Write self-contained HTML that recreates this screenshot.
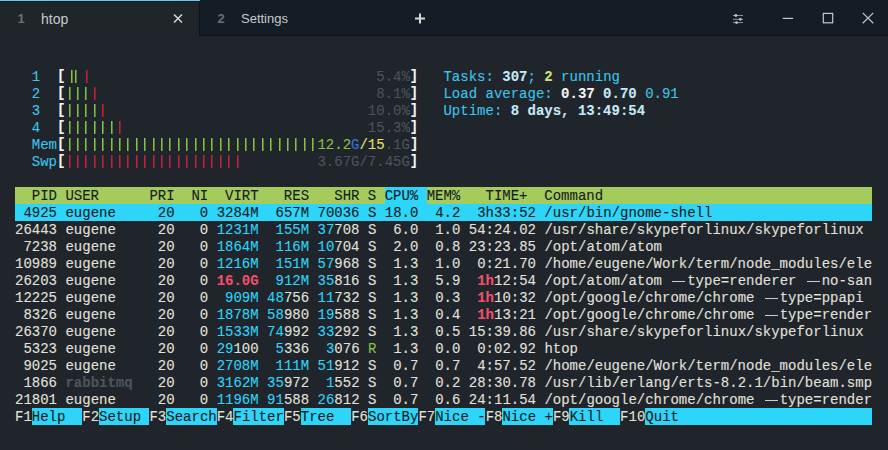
<!DOCTYPE html>
<html><head><meta charset="utf-8"><style>
html,body{margin:0;padding:0;}
body{width:888px;height:450px;overflow:hidden;background:#1f252b;position:relative;font-family:"Liberation Mono",monospace;}
.r{position:absolute;left:15.0px;height:17px;line-height:17px;font-size:14px;white-space:pre;padding-top:1px;box-sizing:border-box;-webkit-text-stroke:0.1px currentColor;}
.b{position:absolute;height:17px;}
.dd{display:inline-block;width:16.8px;height:1.2px;vertical-align:3px;opacity:0.9;padding:0 2px;box-sizing:border-box;background:currentColor;background-clip:content-box;}
.bar{position:absolute;width:2px;height:13px;}
#title{position:absolute;left:0;top:0;width:888px;height:35px;background:#141c25;border-bottom:1px solid #0e1216;}
#tab1{position:absolute;left:0;top:0;width:199px;height:36px;background:#1f252b;}
#tab1top{position:absolute;left:0;top:0;width:200px;height:1px;background:#5ccdf0;}
#tab1sh{position:absolute;left:0;top:1px;width:199px;height:1px;background:#171b1f;}
#tab2b{position:absolute;left:199px;top:0;width:1px;height:35px;background:#0e1216;}
.ts{position:absolute;font-family:"Liberation Sans",sans-serif;font-size:13px;line-height:16px;white-space:pre;}
</style></head><body>
<div id="title"></div>
<div id="tab1"></div>
<div id="tab2b"></div>
<div id="tab1top"></div>
<div id="tab1sh"></div>
<div class="ts" style="left:17.5px;top:11px;color:#6c6e70;font-weight:bold">1</div>
<div class="ts" style="left:41px;top:11px;color:#c8c9ca;font-size:14px;line-height:16px">htop</div>
<svg style="position:absolute;left:173px;top:13px" width="10" height="11" viewBox="0 0 10 11"><path d="M1 1.5L9 9.5M9 1.5L1 9.5" stroke="#d8d8d8" stroke-width="1.5"/></svg>
<div class="ts" style="left:217.5px;top:11px;color:#6c6e70;font-weight:bold">2</div>
<div class="ts" style="left:241px;top:11px;color:#c8c9ca">Settings</div>
<svg style="position:absolute;left:414px;top:13px" width="12" height="12" viewBox="0 0 12 12"><path d="M6 0.5V10.5M1 5.5H11" stroke="#d8d8d8" stroke-width="2"/></svg>
<svg style="position:absolute;left:731px;top:12px" width="14" height="14" viewBox="0 0 14 14"><path d="M2 3.5H12M2 7.3H12M2 10.6H12" stroke="#9aa0a6" stroke-width="0.9"/><circle cx="4.9" cy="3.5" r="1.4" fill="#c4c4c4"/><circle cx="9.3" cy="7.3" r="1.4" fill="#c4c4c4"/><circle cx="5.6" cy="10.6" r="1.4" fill="#c4c4c4"/></svg>
<svg style="position:absolute;left:780px;top:10px" width="100" height="16" viewBox="0 0 100 16"><path d="M2.7 8.4H13.1" stroke="#c8c8c8" stroke-width="1.2"/><rect x="43.3" y="3.4" width="9.4" height="9.4" fill="none" stroke="#c8c8c8" stroke-width="1.2"/><path d="M82.7 2.9L93.3 13.2M93.3 2.9L82.7 13.2" stroke="#c8c8c8" stroke-width="1.2"/></svg>
<div class="r" style="top:68px"><span style="color:#3cc6ec">  1  </span><span style="color:#f4f4f4;font-weight:bold;position:relative;top:-1px">[</span></div>
<div class="r" style="top:68px;left:376.26px"><span style="color:#4d5358">5.4%</span><span style="color:#f4f4f4;font-weight:bold;position:relative;top:-1px">]</span></div>
<div class="bar" style="left:71px;top:70px;background:linear-gradient(90deg,#86c040 50%,#557a33 50%)"></div>
<div class="bar" style="left:75px;top:70px;background:linear-gradient(90deg,#86c040 50%,#557a33 50%)"></div>
<div class="bar" style="left:86px;top:70px;background:linear-gradient(90deg,#c02039 50%,#782234 50%)"></div>
<div class="r" style="top:85px"><span style="color:#3cc6ec">  2  </span><span style="color:#f4f4f4;font-weight:bold;position:relative;top:-1px">[</span></div>
<div class="r" style="top:85px;left:376.26px"><span style="color:#4d5358">8.1%</span><span style="color:#f4f4f4;font-weight:bold;position:relative;top:-1px">]</span></div>
<div class="bar" style="left:69px;top:87px;background:linear-gradient(90deg,#86c040 50%,#557a33 50%)"></div>
<div class="bar" style="left:77px;top:87px;background:linear-gradient(90deg,#86c040 50%,#557a33 50%)"></div>
<div class="bar" style="left:85px;top:87px;background:linear-gradient(90deg,#86c040 50%,#557a33 50%)"></div>
<div class="bar" style="left:94px;top:87px;background:linear-gradient(90deg,#c02039 50%,#782234 50%)"></div>
<div class="r" style="top:102px"><span style="color:#3cc6ec">  3  </span><span style="color:#f4f4f4;font-weight:bold;position:relative;top:-1px">[</span></div>
<div class="r" style="top:102px;left:367.85px"><span style="color:#4d5358">10.0%</span><span style="color:#f4f4f4;font-weight:bold;position:relative;top:-1px">]</span></div>
<div class="bar" style="left:69px;top:104px;background:linear-gradient(90deg,#86c040 50%,#557a33 50%)"></div>
<div class="bar" style="left:77px;top:104px;background:linear-gradient(90deg,#86c040 50%,#557a33 50%)"></div>
<div class="bar" style="left:85px;top:104px;background:linear-gradient(90deg,#86c040 50%,#557a33 50%)"></div>
<div class="bar" style="left:94px;top:104px;background:linear-gradient(90deg,#86c040 50%,#557a33 50%)"></div>
<div class="bar" style="left:102px;top:104px;background:linear-gradient(90deg,#c02039 50%,#782234 50%)"></div>
<div class="r" style="top:119px"><span style="color:#3cc6ec">  4  </span><span style="color:#f4f4f4;font-weight:bold;position:relative;top:-1px">[</span></div>
<div class="r" style="top:119px;left:367.85px"><span style="color:#4d5358">15.3%</span><span style="color:#f4f4f4;font-weight:bold;position:relative;top:-1px">]</span></div>
<div class="bar" style="left:69px;top:121px;background:linear-gradient(90deg,#86c040 50%,#557a33 50%)"></div>
<div class="bar" style="left:77px;top:121px;background:linear-gradient(90deg,#86c040 50%,#557a33 50%)"></div>
<div class="bar" style="left:85px;top:121px;background:linear-gradient(90deg,#86c040 50%,#557a33 50%)"></div>
<div class="bar" style="left:94px;top:121px;background:linear-gradient(90deg,#86c040 50%,#557a33 50%)"></div>
<div class="bar" style="left:102px;top:121px;background:linear-gradient(90deg,#86c040 50%,#557a33 50%)"></div>
<div class="bar" style="left:111px;top:121px;background:linear-gradient(90deg,#86c040 50%,#557a33 50%)"></div>
<div class="bar" style="left:119px;top:121px;background:linear-gradient(90deg,#c02039 50%,#782234 50%)"></div>
<div class="r" style="top:136px"><span style="color:#3cc6ec">  Mem</span><span style="color:#f4f4f4;font-weight:bold;position:relative;top:-1px">[</span></div>
<div class="bar" style="left:69px;top:138px;background:linear-gradient(90deg,#86c040 50%,#557a33 50%)"></div>
<div class="bar" style="left:77px;top:138px;background:linear-gradient(90deg,#86c040 50%,#557a33 50%)"></div>
<div class="bar" style="left:85px;top:138px;background:linear-gradient(90deg,#86c040 50%,#557a33 50%)"></div>
<div class="bar" style="left:94px;top:138px;background:linear-gradient(90deg,#86c040 50%,#557a33 50%)"></div>
<div class="bar" style="left:102px;top:138px;background:linear-gradient(90deg,#86c040 50%,#557a33 50%)"></div>
<div class="bar" style="left:111px;top:138px;background:linear-gradient(90deg,#86c040 50%,#557a33 50%)"></div>
<div class="bar" style="left:119px;top:138px;background:linear-gradient(90deg,#86c040 50%,#557a33 50%)"></div>
<div class="bar" style="left:127px;top:138px;background:linear-gradient(90deg,#86c040 50%,#557a33 50%)"></div>
<div class="bar" style="left:136px;top:138px;background:linear-gradient(90deg,#86c040 50%,#557a33 50%)"></div>
<div class="bar" style="left:144px;top:138px;background:linear-gradient(90deg,#86c040 50%,#557a33 50%)"></div>
<div class="bar" style="left:153px;top:138px;background:linear-gradient(90deg,#86c040 50%,#557a33 50%)"></div>
<div class="bar" style="left:161px;top:138px;background:linear-gradient(90deg,#86c040 50%,#557a33 50%)"></div>
<div class="bar" style="left:169px;top:138px;background:linear-gradient(90deg,#86c040 50%,#557a33 50%)"></div>
<div class="bar" style="left:178px;top:138px;background:linear-gradient(90deg,#86c040 50%,#557a33 50%)"></div>
<div class="bar" style="left:186px;top:138px;background:linear-gradient(90deg,#86c040 50%,#557a33 50%)"></div>
<div class="bar" style="left:195px;top:138px;background:linear-gradient(90deg,#86c040 50%,#557a33 50%)"></div>
<div class="bar" style="left:203px;top:138px;background:linear-gradient(90deg,#86c040 50%,#557a33 50%)"></div>
<div class="bar" style="left:211px;top:138px;background:linear-gradient(90deg,#86c040 50%,#557a33 50%)"></div>
<div class="bar" style="left:220px;top:138px;background:linear-gradient(90deg,#86c040 50%,#557a33 50%)"></div>
<div class="bar" style="left:228px;top:138px;background:linear-gradient(90deg,#86c040 50%,#557a33 50%)"></div>
<div class="bar" style="left:237px;top:138px;background:linear-gradient(90deg,#86c040 50%,#557a33 50%)"></div>
<div class="bar" style="left:245px;top:138px;background:linear-gradient(90deg,#86c040 50%,#557a33 50%)"></div>
<div class="bar" style="left:253px;top:138px;background:linear-gradient(90deg,#86c040 50%,#557a33 50%)"></div>
<div class="bar" style="left:262px;top:138px;background:linear-gradient(90deg,#86c040 50%,#557a33 50%)"></div>
<div class="bar" style="left:270px;top:138px;background:linear-gradient(90deg,#86c040 50%,#557a33 50%)"></div>
<div class="bar" style="left:279px;top:138px;background:linear-gradient(90deg,#86c040 50%,#557a33 50%)"></div>
<div class="bar" style="left:287px;top:138px;background:linear-gradient(90deg,#86c040 50%,#557a33 50%)"></div>
<div class="bar" style="left:295px;top:138px;background:linear-gradient(90deg,#86c040 50%,#557a33 50%)"></div>
<div class="bar" style="left:304px;top:138px;background:linear-gradient(90deg,#86c040 50%,#557a33 50%)"></div>
<div class="bar" style="left:312px;top:138px;background:linear-gradient(90deg,#86c040 50%,#557a33 50%)"></div>
<div class="r" style="top:136px;left:317.45px"><span style="color:#86c040">12.2</span><span style="color:#3a6fd8">G</span><span style="color:#e8e06a">/15</span><span style="color:#4d5358">.1G</span><span style="color:#f4f4f4;font-weight:bold;position:relative;top:-1px">]</span></div>
<div class="r" style="top:153px"><span style="color:#3cc6ec">  Swp</span><span style="color:#f4f4f4;font-weight:bold;position:relative;top:-1px">[</span></div>
<div class="bar" style="left:69px;top:155px;background:linear-gradient(90deg,#c02039 50%,#782234 50%)"></div>
<div class="bar" style="left:77px;top:155px;background:linear-gradient(90deg,#c02039 50%,#782234 50%)"></div>
<div class="bar" style="left:85px;top:155px;background:linear-gradient(90deg,#c02039 50%,#782234 50%)"></div>
<div class="bar" style="left:94px;top:155px;background:linear-gradient(90deg,#c02039 50%,#782234 50%)"></div>
<div class="bar" style="left:102px;top:155px;background:linear-gradient(90deg,#c02039 50%,#782234 50%)"></div>
<div class="bar" style="left:111px;top:155px;background:linear-gradient(90deg,#c02039 50%,#782234 50%)"></div>
<div class="bar" style="left:119px;top:155px;background:linear-gradient(90deg,#c02039 50%,#782234 50%)"></div>
<div class="bar" style="left:127px;top:155px;background:linear-gradient(90deg,#c02039 50%,#782234 50%)"></div>
<div class="bar" style="left:136px;top:155px;background:linear-gradient(90deg,#c02039 50%,#782234 50%)"></div>
<div class="bar" style="left:144px;top:155px;background:linear-gradient(90deg,#c02039 50%,#782234 50%)"></div>
<div class="bar" style="left:153px;top:155px;background:linear-gradient(90deg,#c02039 50%,#782234 50%)"></div>
<div class="bar" style="left:161px;top:155px;background:linear-gradient(90deg,#c02039 50%,#782234 50%)"></div>
<div class="bar" style="left:169px;top:155px;background:linear-gradient(90deg,#c02039 50%,#782234 50%)"></div>
<div class="bar" style="left:178px;top:155px;background:linear-gradient(90deg,#c02039 50%,#782234 50%)"></div>
<div class="bar" style="left:186px;top:155px;background:linear-gradient(90deg,#c02039 50%,#782234 50%)"></div>
<div class="bar" style="left:195px;top:155px;background:linear-gradient(90deg,#c02039 50%,#782234 50%)"></div>
<div class="bar" style="left:203px;top:155px;background:linear-gradient(90deg,#c02039 50%,#782234 50%)"></div>
<div class="bar" style="left:211px;top:155px;background:linear-gradient(90deg,#c02039 50%,#782234 50%)"></div>
<div class="bar" style="left:220px;top:155px;background:linear-gradient(90deg,#c02039 50%,#782234 50%)"></div>
<div class="bar" style="left:228px;top:155px;background:linear-gradient(90deg,#c02039 50%,#782234 50%)"></div>
<div class="bar" style="left:237px;top:155px;background:linear-gradient(90deg,#c02039 50%,#782234 50%)"></div>
<div class="r" style="top:153px;left:317.45px"><span style="color:#4d5358">3.67G/7.45G</span><span style="color:#f4f4f4;font-weight:bold;position:relative;top:-1px">]</span></div>
<div class="r" style="top:68px;left:443.47px"><span style="color:#3cc6ec">Tasks: </span><span style="color:#c6e8f8;font-weight:bold">307</span><span style="color:#3cc6ec">; </span><span style="color:#c9e27a;font-weight:bold">2</span><span style="color:#3cc6ec"> running</span></div>
<div class="r" style="top:85px;left:443.47px"><span style="color:#3cc6ec">Load average: </span><span style="color:#f4f4f4;font-weight:bold">0.37 </span><span style="color:#c6e8f8;font-weight:bold">0.70 </span><span style="color:#3cc6ec">0.91</span></div>
<div class="r" style="top:102px;left:443.47px"><span style="color:#3cc6ec">Uptime: </span><span style="color:#c6e8f8;font-weight:bold">8 days, 13:49:54</span></div>
<div class="b" style="top:187px;left:15.00px;width:856.93px;background:#a5cb5c"></div>
<div class="b" style="top:187px;left:384.66px;width:42.01px;background:#2dd5f9"></div>
<div class="r" style="top:187px"><span style="color:#141b21">  PID USER      PRI  NI  VIRT   RES   SHR S CPU% MEM%   TIME+  Command</span></div>
<div class="b" style="top:204px;left:15.00px;width:856.93px;background:#2dd5f9"></div>
<div class="r" style="top:204px"><span style="color:#141b21"> 4925 </span><span style="color:#141b21">eugene     </span><span style="color:#141b21">20   0 </span><span style="color:#141b21">3284M</span><span style="color:#141b21"> </span><span style="color:#141b21"> 657M</span><span style="color:#141b21"> </span><span style="color:#141b21">70036</span><span style="color:#141b21"> </span><span style="color:#141b21">S</span><span style="color:#141b21"> 18.0  4.2 </span><span style="color:#141b21"> 3h33:52</span><span style="color:#141b21"> /usr/bin/gnome-shell</span></div>
<div class="r" style="top:221px"><span style="color:#e2e1dc">26443 </span><span style="color:#e2e1dc">eugene     </span><span style="color:#e2e1dc">20   0 </span><span style="color:#2dd5f9">1231M</span><span style="color:#e2e1dc"> </span><span style="color:#2dd5f9"> 155M</span><span style="color:#e2e1dc"> </span><span style="color:#2dd5f9">37</span><span style="color:#e2e1dc">708</span><span style="color:#e2e1dc"> </span><span style="color:#e2e1dc">S</span><span style="color:#e2e1dc">  6.0  1.0 </span><span style="color:#e2e1dc">54:24.02</span><span style="color:#e2e1dc"> /usr/share/skypeforlinux/skypeforlinux</span></div>
<div class="r" style="top:238px"><span style="color:#e2e1dc"> 7238 </span><span style="color:#e2e1dc">eugene     </span><span style="color:#e2e1dc">20   0 </span><span style="color:#2dd5f9">1864M</span><span style="color:#e2e1dc"> </span><span style="color:#2dd5f9"> 116M</span><span style="color:#e2e1dc"> </span><span style="color:#2dd5f9">10</span><span style="color:#e2e1dc">704</span><span style="color:#e2e1dc"> </span><span style="color:#e2e1dc">S</span><span style="color:#e2e1dc">  2.0  0.8 </span><span style="color:#e2e1dc">23:23.85</span><span style="color:#e2e1dc"> /opt/atom/atom</span></div>
<div class="r" style="top:255px"><span style="color:#e2e1dc">10989 </span><span style="color:#e2e1dc">eugene     </span><span style="color:#e2e1dc">20   0 </span><span style="color:#2dd5f9">1216M</span><span style="color:#e2e1dc"> </span><span style="color:#2dd5f9"> 151M</span><span style="color:#e2e1dc"> </span><span style="color:#2dd5f9">57</span><span style="color:#e2e1dc">968</span><span style="color:#e2e1dc"> </span><span style="color:#e2e1dc">S</span><span style="color:#e2e1dc">  1.3  1.0 </span><span style="color:#e2e1dc"> 0:21.70</span><span style="color:#e2e1dc"> /home/eugene/Work/term/node_modules/ele</span></div>
<div class="r" style="top:272px"><span style="color:#e2e1dc">26203 </span><span style="color:#e2e1dc">eugene     </span><span style="color:#e2e1dc">20   0 </span><span style="color:#f0506e;font-weight:bold">16.0G</span><span style="color:#e2e1dc"> </span><span style="color:#2dd5f9"> 912M</span><span style="color:#e2e1dc"> </span><span style="color:#2dd5f9">35</span><span style="color:#e2e1dc">816</span><span style="color:#e2e1dc"> </span><span style="color:#e2e1dc">S</span><span style="color:#e2e1dc">  1.3  5.9 </span><span style="color:#e2e1dc"> </span><span style="color:#f0506e;font-weight:bold">1h</span><span style="color:#e2e1dc">12:54</span><span style="color:#e2e1dc"> /opt/atom/atom <span class="dd"></span>type=renderer <span class="dd"></span>no-san</span></div>
<div class="r" style="top:289px"><span style="color:#e2e1dc">12225 </span><span style="color:#e2e1dc">eugene     </span><span style="color:#e2e1dc">20   0 </span><span style="color:#2dd5f9"> 909M</span><span style="color:#e2e1dc"> </span><span style="color:#2dd5f9">48</span><span style="color:#e2e1dc">756</span><span style="color:#e2e1dc"> </span><span style="color:#2dd5f9">11</span><span style="color:#e2e1dc">732</span><span style="color:#e2e1dc"> </span><span style="color:#e2e1dc">S</span><span style="color:#e2e1dc">  1.3  0.3 </span><span style="color:#e2e1dc"> </span><span style="color:#f0506e;font-weight:bold">1h</span><span style="color:#e2e1dc">10:32</span><span style="color:#e2e1dc"> /opt/google/chrome/chrome <span class="dd"></span>type=ppapi</span></div>
<div class="r" style="top:306px"><span style="color:#e2e1dc"> 8326 </span><span style="color:#e2e1dc">eugene     </span><span style="color:#e2e1dc">20   0 </span><span style="color:#2dd5f9">1878M</span><span style="color:#e2e1dc"> </span><span style="color:#2dd5f9">58</span><span style="color:#e2e1dc">980</span><span style="color:#e2e1dc"> </span><span style="color:#2dd5f9">19</span><span style="color:#e2e1dc">588</span><span style="color:#e2e1dc"> </span><span style="color:#e2e1dc">S</span><span style="color:#e2e1dc">  1.3  0.4 </span><span style="color:#e2e1dc"> </span><span style="color:#f0506e;font-weight:bold">1h</span><span style="color:#e2e1dc">13:21</span><span style="color:#e2e1dc"> /opt/google/chrome/chrome <span class="dd"></span>type=render</span></div>
<div class="r" style="top:323px"><span style="color:#e2e1dc">26370 </span><span style="color:#e2e1dc">eugene     </span><span style="color:#e2e1dc">20   0 </span><span style="color:#2dd5f9">1533M</span><span style="color:#e2e1dc"> </span><span style="color:#2dd5f9">74</span><span style="color:#e2e1dc">992</span><span style="color:#e2e1dc"> </span><span style="color:#2dd5f9">33</span><span style="color:#e2e1dc">292</span><span style="color:#e2e1dc"> </span><span style="color:#e2e1dc">S</span><span style="color:#e2e1dc">  1.3  0.5 </span><span style="color:#e2e1dc">15:39.86</span><span style="color:#e2e1dc"> /usr/share/skypeforlinux/skypeforlinux</span></div>
<div class="r" style="top:340px"><span style="color:#e2e1dc"> 5323 </span><span style="color:#e2e1dc">eugene     </span><span style="color:#e2e1dc">20   0 </span><span style="color:#2dd5f9">29</span><span style="color:#e2e1dc">100</span><span style="color:#e2e1dc"> </span><span style="color:#2dd5f9"> 5</span><span style="color:#e2e1dc">336</span><span style="color:#e2e1dc"> </span><span style="color:#2dd5f9"> 3</span><span style="color:#e2e1dc">076</span><span style="color:#e2e1dc"> </span><span style="color:#86c040">R</span><span style="color:#e2e1dc">  1.3  0.0 </span><span style="color:#e2e1dc"> 0:02.92</span><span style="color:#e2e1dc"> htop</span></div>
<div class="r" style="top:357px"><span style="color:#e2e1dc"> 9025 </span><span style="color:#e2e1dc">eugene     </span><span style="color:#e2e1dc">20   0 </span><span style="color:#2dd5f9">2708M</span><span style="color:#e2e1dc"> </span><span style="color:#2dd5f9"> 111M</span><span style="color:#e2e1dc"> </span><span style="color:#2dd5f9">51</span><span style="color:#e2e1dc">912</span><span style="color:#e2e1dc"> </span><span style="color:#e2e1dc">S</span><span style="color:#e2e1dc">  0.7  0.7 </span><span style="color:#e2e1dc"> 4:57.52</span><span style="color:#e2e1dc"> /home/eugene/Work/term/node_modules/ele</span></div>
<div class="r" style="top:374px"><span style="color:#e2e1dc"> 1866 </span><span style="color:#4f555a;font-weight:bold">rabbitmq</span><span style="color:#e2e1dc">   </span><span style="color:#e2e1dc">20   0 </span><span style="color:#2dd5f9">3162M</span><span style="color:#e2e1dc"> </span><span style="color:#2dd5f9">35</span><span style="color:#e2e1dc">972</span><span style="color:#e2e1dc"> </span><span style="color:#2dd5f9"> 1</span><span style="color:#e2e1dc">552</span><span style="color:#e2e1dc"> </span><span style="color:#e2e1dc">S</span><span style="color:#e2e1dc">  0.7  0.2 </span><span style="color:#e2e1dc">28:30.78</span><span style="color:#e2e1dc"> /usr/lib/erlang/erts-8.2.1/bin/beam.smp</span></div>
<div class="r" style="top:391px"><span style="color:#e2e1dc">21801 </span><span style="color:#e2e1dc">eugene     </span><span style="color:#e2e1dc">20   0 </span><span style="color:#2dd5f9">1196M</span><span style="color:#e2e1dc"> </span><span style="color:#2dd5f9">91</span><span style="color:#e2e1dc">588</span><span style="color:#e2e1dc"> </span><span style="color:#2dd5f9">26</span><span style="color:#e2e1dc">812</span><span style="color:#e2e1dc"> </span><span style="color:#e2e1dc">S</span><span style="color:#e2e1dc">  0.7  0.6 </span><span style="color:#e2e1dc">24:11.54</span><span style="color:#e2e1dc"> /opt/google/chrome/chrome <span class="dd"></span>type=render</span></div>
<div class="b" style="top:408px;left:31.80px;width:50.41px;background:#2dd5f9"></div>
<div class="b" style="top:408px;left:99.01px;width:50.41px;background:#2dd5f9"></div>
<div class="b" style="top:408px;left:166.22px;width:50.41px;background:#2dd5f9"></div>
<div class="b" style="top:408px;left:233.43px;width:50.41px;background:#2dd5f9"></div>
<div class="b" style="top:408px;left:300.64px;width:50.41px;background:#2dd5f9"></div>
<div class="b" style="top:408px;left:367.85px;width:50.41px;background:#2dd5f9"></div>
<div class="b" style="top:408px;left:435.07px;width:50.41px;background:#2dd5f9"></div>
<div class="b" style="top:408px;left:502.28px;width:50.41px;background:#2dd5f9"></div>
<div class="b" style="top:408px;left:569.49px;width:50.41px;background:#2dd5f9"></div>
<div class="b" style="top:408px;left:645.10px;width:226.84px;background:#2dd5f9"></div>
<div class="r" style="top:408px"><span style="color:#e2e1dc">F1</span><span style="color:#141b21">Help  </span><span style="color:#e2e1dc">F2</span><span style="color:#141b21">Setup </span><span style="color:#e2e1dc">F3</span><span style="color:#141b21">Search</span><span style="color:#e2e1dc">F4</span><span style="color:#141b21">Filter</span><span style="color:#e2e1dc">F5</span><span style="color:#141b21">Tree  </span><span style="color:#e2e1dc">F6</span><span style="color:#141b21">SortBy</span><span style="color:#e2e1dc">F7</span><span style="color:#141b21">Nice -</span><span style="color:#e2e1dc">F8</span><span style="color:#141b21">Nice +</span><span style="color:#e2e1dc">F9</span><span style="color:#141b21">Kill  </span><span style="color:#e2e1dc">F10</span><span style="color:#141b21">Quit</span></div>
</body></html>
